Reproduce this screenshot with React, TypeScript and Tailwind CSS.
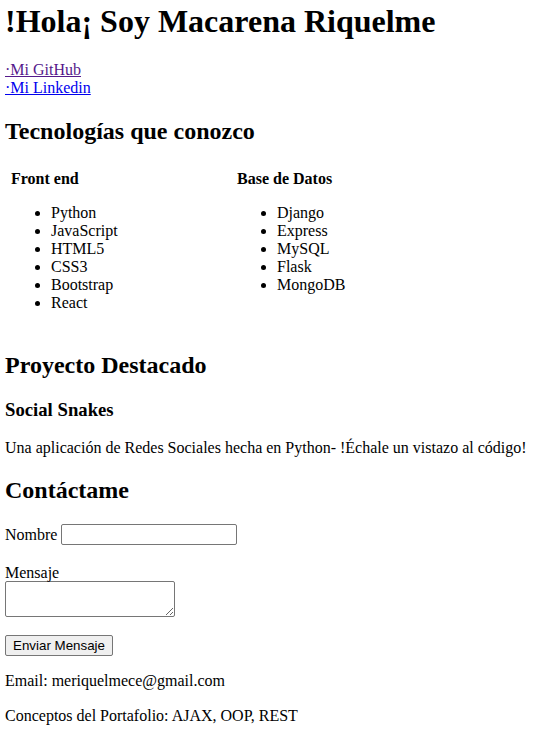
const frontEnd = ["Python", "JavaScript", "HTML5", "CSS3", "Bootstrap", "React"];
const backEnd = ["Django", "Express", "MySQL", "Flask", "MongoDB"];

const App = () => {
  return (
    <div className="pl-[5px] pr-[5px] bg-white text-black font-['Liberation_Serif','Times_New_Roman',serif] text-[16px] leading-[normal] min-h-screen">
      <h1 className="text-[32px] font-bold mt-[3px]">!Hola¡ Soy Macarena Riquelme</h1>

      <p className="mt-[21px]">
        <a href="#" className="underline text-[#551a8b]">·Mi GitHub</a>
        <br />
        <a href="#" className="underline text-[#0000ee]">·Mi Linkedin</a>
      </p>

      <section>
        <h2 className="text-[24px] font-bold mt-[21px]">Tecnologías que conozco</h2>
        <div className="flex ml-[6px] mt-[25px]">
          <div className="w-[226px]">
            <h4 className="font-bold">Front end</h4>
            <ul className="list-disc pl-[40px] mt-[16px]">
              {frontEnd.map((t) => (
                <li key={t}>{t}</li>
              ))}
            </ul>
          </div>
          <div>
            <h4 className="font-bold">Base de Datos</h4>
            <ul className="list-disc pl-[40px] mt-[16px]">
              {backEnd.map((t) => (
                <li key={t}>{t}</li>
              ))}
            </ul>
          </div>
        </div>
      </section>

      <section>
        <h2 className="text-[24px] font-bold mt-[40px]">Proyecto Destacado</h2>
        <h3 className="text-[18.72px] font-bold mt-[20px]">Social Snakes</h3>
        <p className="mt-[18px]">Una aplicación de Redes Sociales hecha en Python- !Échale un vistazo al código!</p>
      </section>

      <section>
        <h2 className="text-[24px] font-bold mt-[20px]">Contáctame</h2>
        <form onSubmit={(e) => e.preventDefault()}>
          <p className="mt-[20px] flex items-start">
            <label htmlFor="nombre" className="mt-[2px]">Nombre</label>
            <input
              id="nombre"
              type="text"
              className="ml-[4px] w-[176px] h-[21px] border border-[#767676] rounded-[2px] px-[2px] text-[13.33px] font-['Liberation_Sans',Arial,sans-serif]"
            />
          </p>
          <p className="mt-[19px]">
            <label htmlFor="mensaje">Mensaje</label>
            <textarea
              id="mensaje"
              className="block -mt-[1px] w-[170px] h-[36px] border border-[#767676] rounded-[2px] p-[2px] text-[13.33px] font-['Liberation_Mono',monospace] resize"
            />
          </p>
          <button
            type="submit"
            className="mt-[18px] w-[108px] h-[21px] px-[6px] bg-[#efefef] border border-[#767676] rounded-[2px] text-[13.33px] font-['Liberation_Sans',Arial,sans-serif] text-black"
          >
            Enviar Mensaje
          </button>
        </form>
        <p className="mt-[16px]">Email: meriquelmece@gmail.com</p>
        <p className="mt-[17px]">Conceptos del Portafolio: AJAX, OOP, REST</p>
      </section>
    </div>
  );
};

export default App;
